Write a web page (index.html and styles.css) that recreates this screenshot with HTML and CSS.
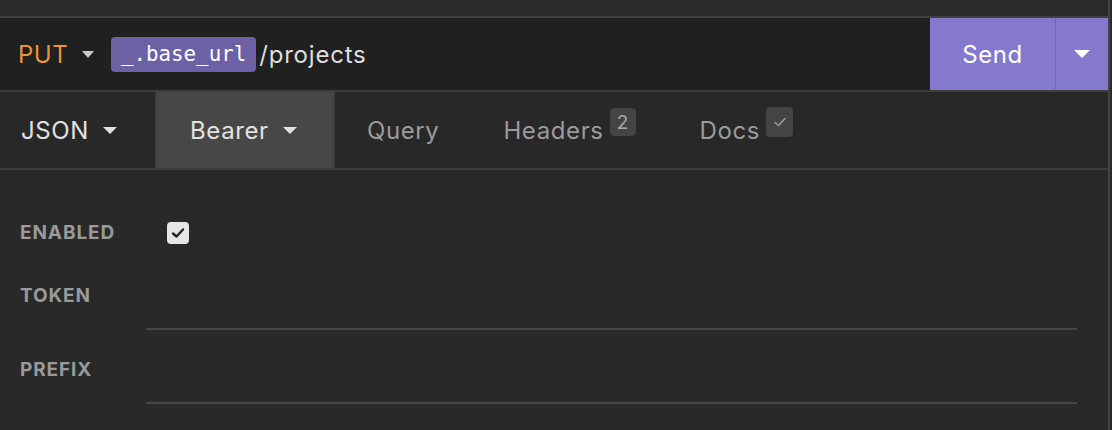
FILE: index.html
```html
<!DOCTYPE html>
<html>
<head>
<meta charset="utf-8">
<link rel="stylesheet" href="styles.css">
</head>
<body>
<div class="app">
  <div class="pane">
    <div class="top-strip"></div>
    <div class="urlbar">
      <div class="method"><span class="method-name">PUT</span><span class="caret"></span></div>
      <div class="url"><span class="tag">_.base_url</span><span class="path">/projects</span></div>
      <div class="send">
        <div class="send-label">Send</div>
        <div class="send-drop"><span class="caret white"></span></div>
      </div>
    </div>
    <div class="tabs">
      <div class="tab tab-json">JSON <span class="caret light"></span></div>
      <div class="tab tab-bearer active">Bearer <span class="caret light"></span></div>
      <div class="tab">Query</div>
      <div class="tab">Headers<span class="badge">2</span></div>
      <div class="tab">Docs<span class="badge check"><svg width="14" height="12" viewBox="0 0 14 12"><path d="M2 6.5 L5.5 9.5 L12 2.5" fill="none" stroke="#9c9c9c" stroke-width="1.6" stroke-linecap="round" stroke-linejoin="round"/></svg></span></div>
    </div>
    <div class="form">
      <div class="row row-enabled">
        <div class="label">ENABLED</div>
        <div class="field"><span class="checkbox"><svg width="14" height="12" viewBox="0 0 14 12"><path d="M2 6.5 L5.5 9.5 L12 2.5" fill="none" stroke="#222" stroke-width="2.4" stroke-linecap="round" stroke-linejoin="round"/></svg></span></div>
      </div>
      <div class="row row-input">
        <div class="label">TOKEN</div>
        <div class="field"><div class="input"></div></div>
      </div>
      <div class="row row-input">
        <div class="label">PREFIX</div>
        <div class="field"><div class="input"></div></div>
      </div>
    </div>
  </div>
</div>
</body>
</html>
```

FILE: styles.css
```css
html, body {
  margin: 0;
  padding: 0;
  background: #2a2a2a;
  height: 100%;
  overflow: hidden;
}
body {
  font-family: Inter, "Open Sans", sans-serif;
}
.app {
  display: flex;
  height: 430px;
}
.pane {
  width: 1108px;
  border-right: 2px solid #444;
  background: #292929;
  display: flex;
  flex-direction: column;
}
.top-strip {
  height: 16px;
  background: #2a2a2a;
  border-bottom: 2px solid #414141;
}
.urlbar {
  height: 72px;
  background: #202020;
  display: flex;
  align-items: center;
  border-bottom: 2px solid #3e3e3e;
}
.method {
  color: #e8943a;
  font-size: 24px;
  padding-left: 18px;
  display: flex;
  align-items: center;
  width: 93px;
}
.method-name {
  width: 64px;
  letter-spacing: 0.5px;
}
.caret {
  display: inline-block;
  width: 0;
  height: 0;
  border-left: 6px solid transparent;
  border-right: 6px solid transparent;
  border-top: 7px solid #c8c8c8;
}
.caret.white { border-top-color: #fff; }
.caret.light { border-top-color: #e0e0e0; }
.url {
  flex: 1;
  display: flex;
  align-items: center;
}
.tag {
  background: #6b61a4;
  color: #fff;
  font-family: "DejaVu Sans Mono", "Liberation Mono", monospace;
  font-size: 20.8px;
  height: 35px;
  line-height: 35px;
  padding: 0 10px;
  border-radius: 4px;
  margin-right: 3px;
}
.path {
  color: #dedede;
  font-size: 24px;
  letter-spacing: 0.8px;
}
.send {
  width: 178px;
  height: 72px;
  background: #8579cd;
  display: flex;
  color: #fff;
}
.send-label {
  width: 125px;
  display: flex;
  align-items: center;
  justify-content: center;
  font-size: 24px;
  letter-spacing: 0.5px;
  border-right: 1px solid #7068b0;
}
.send-drop {
  flex: 1;
  display: flex;
  align-items: center;
  justify-content: center;
}
.send-drop .caret {
  border-left-width: 8px;
  border-right-width: 8px;
  border-top-width: 8px;
}
.tabs {
  height: 76px;
  display: flex;
  background: #282828;
  border-bottom: 2px solid #3e3e3e;
}
.tab {
  display: flex;
  align-items: center;
  padding: 0 32px;
  font-size: 24px;
  letter-spacing: 0.6px;
  color: #9b9b9b;
  box-sizing: border-box;
}
.tab .caret {
  margin-left: 14px;
  border-left-width: 7px;
  border-right-width: 7px;
  border-top-width: 7px;
}
.tab-json {
  color: #e2e2e2;
  width: 155px;
  padding: 0 0 0 21px;
}
.tab-bearer {
  color: #e2e2e2;
  width: 180px;
  padding: 0 0 0 33px;
}
.tab.active {
  background: #474747;
  border-left: 2px solid #3e3e3e;
  border-right: 2px solid #3e3e3e;
}
.badge {
  align-self: flex-start;
  margin-top: 16px;
  margin-left: 6px;
  min-width: 26px;
  height: 28px;
  border-radius: 4px;
  background: #444;
  color: #a8a8a8;
  font-size: 19px;
  letter-spacing: 0;
  display: flex;
  align-items: center;
  justify-content: center;
}
.badge.check {
  width: 27px;
  height: 30px;
  margin-top: 15px;
}
.form {
  padding: 42px 31px 0 20px;
  display: flex;
  flex-direction: column;
}
.row {
  display: grid;
  grid-template-columns: 126px 1fr;
  align-items: center;
}
.row-enabled {
  height: 40px;
  margin-bottom: 8px;
}
.row-input {
  height: 70px;
  margin-bottom: 4px;
}
.label {
  color: #9a9a9a;
  font-weight: 700;
  font-size: 19px;
  letter-spacing: 0.9px;
}
.checkbox {
  margin-left: 21px;
  margin-top: 2px;
  width: 22px;
  height: 22px;
  border-radius: 4px;
  background: #e6e6e6;
  display: flex;
  align-items: center;
  justify-content: center;
}
.input {
  height: 68px;
  border-bottom: 2px solid #474747;
}
```
